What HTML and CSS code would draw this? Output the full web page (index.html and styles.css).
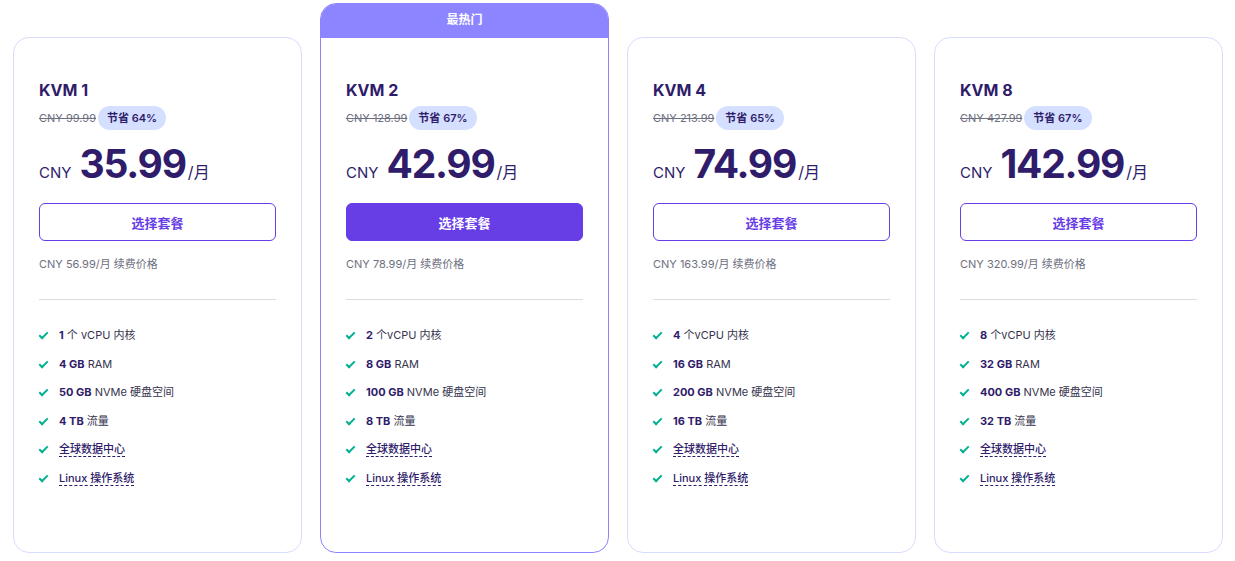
FILE: index.html
```html
<!DOCTYPE html>
<html lang="zh-CN">
<head>
  <meta charset="UTF-8" />
  <meta name="viewport" content="width=device-width, initial-scale=1" />
  <title>VPS 套餐</title>
  <link rel="stylesheet" href="styles.css">
</head>
<body>
  <div class="plans">
    <div class="card">
      <div class="card-body">
        <h2>KVM 1</h2>
        <div class="old"><s>CNY 99.99</s><span class="save">节省 64%</span></div>
        <div class="price"><span class="cur">CNY</span><span class="num">35.99</span><span class="per">/月</span></div>
        <button class="pick">选择套餐</button>
        <p class="renew">CNY 56.99/月 续费价格</p>
        <hr />
        <ul class="features">
          <li><b>1</b> 个 vCPU 内核</li>
          <li><b>4 GB</b> RAM</li>
          <li><b>50 GB</b> NVMe 硬盘空间</li>
          <li><b>4 TB</b> 流量</li>
          <li><span class="dash">全球数据中心</span></li>
          <li><span class="dash">Linux 操作系统</span></li>
        </ul>
      </div>
    </div>

    <div class="card hot">
      <div class="hot-label">最热门</div>
      <div class="card-body">
        <h2>KVM 2</h2>
        <div class="old"><s>CNY 128.99</s><span class="save">节省 67%</span></div>
        <div class="price"><span class="cur">CNY</span><span class="num">42.99</span><span class="per">/月</span></div>
        <button class="pick solid">选择套餐</button>
        <p class="renew">CNY 78.99/月 续费价格</p>
        <hr />
        <ul class="features">
          <li><b>2</b> 个vCPU 内核</li>
          <li><b>8 GB</b> RAM</li>
          <li><b>100 GB</b> NVMe 硬盘空间</li>
          <li><b>8 TB</b> 流量</li>
          <li><span class="dash">全球数据中心</span></li>
          <li><span class="dash">Linux 操作系统</span></li>
        </ul>
      </div>
    </div>

    <div class="card">
      <div class="card-body">
        <h2>KVM 4</h2>
        <div class="old"><s>CNY 213.99</s><span class="save">节省 65%</span></div>
        <div class="price"><span class="cur">CNY</span><span class="num">74.99</span><span class="per">/月</span></div>
        <button class="pick">选择套餐</button>
        <p class="renew">CNY 163.99/月 续费价格</p>
        <hr />
        <ul class="features">
          <li><b>4</b> 个vCPU 内核</li>
          <li><b>16 GB</b> RAM</li>
          <li><b>200 GB</b> NVMe 硬盘空间</li>
          <li><b>16 TB</b> 流量</li>
          <li><span class="dash">全球数据中心</span></li>
          <li><span class="dash">Linux 操作系统</span></li>
        </ul>
      </div>
    </div>

    <div class="card">
      <div class="card-body">
        <h2>KVM 8</h2>
        <div class="old"><s>CNY 427.99</s><span class="save">节省 67%</span></div>
        <div class="price"><span class="cur">CNY</span><span class="num">142.99</span><span class="per">/月</span></div>
        <button class="pick">选择套餐</button>
        <p class="renew">CNY 320.99/月 续费价格</p>
        <hr />
        <ul class="features">
          <li><b>8</b> 个vCPU 内核</li>
          <li><b>32 GB</b> RAM</li>
          <li><b>400 GB</b> NVMe 硬盘空间</li>
          <li><b>32 TB</b> 流量</li>
          <li><span class="dash">全球数据中心</span></li>
          <li><span class="dash">Linux 操作系统</span></li>
        </ul>
      </div>
    </div>
  </div>
</body>
</html>
```

FILE: styles.css
```css
body {
  margin: 0; background: #fff; color: #2f1c6a;
  font-family: Inter, "Noto Sans CJK SC", sans-serif;
}
.plans {
  display: grid; grid-template-columns: repeat(4, 1fr); gap: 18px;
  align-items: end; padding: 3px 12px 8px 13px;
}
.card {
  border: 1px solid #d8ddff; border-radius: 16px; background: #fff;
  overflow: hidden;
}
.card.hot { border-color: #8c85ff; }
.hot-label {
  background: #8c85ff; color: #fff; text-align: center;
  font-size: 12px; font-weight: 700; height: 34px; line-height: 31px;
}
.card-body { padding: 40px 25px 0; height: 514px; box-sizing: border-box; }
h2 { margin: 0; font-size: 16px; line-height: 24px; font-weight: 700; }
.old {
  display: flex; align-items: center; gap: 2px; margin-top: 4px;
  font-size: 11px; color: #6d7081;
}
.save {
  background: #d5dfff; color: #2f1c6a; border-radius: 12px;
  padding: 0 9px; line-height: 24px; font-weight: 600; font-size: 11px;
}
.price { display: flex; align-items: baseline; margin-top: 12px; height: 44px; }
.cur { font-size: 15px; margin-right: 8px; }
.num { font-size: 39px; font-weight: 700; letter-spacing: -1.2px; line-height: 44px; }
.per { font-size: 16px; margin-left: 2px; }
.pick {
  display: block; width: 100%; height: 38px; margin-top: 17px;
  border: 1px solid #673de6; border-radius: 6px; background: #fff;
  color: #673de6; font: 700 13px Inter, "Noto Sans CJK SC", sans-serif;
}
.pick.solid { background: #673de6; color: #fff; }
.renew { margin: 14px 0 0; font-size: 11px; line-height: 18px; color: #6d7081; }
hr { border: 0; border-top: 1px solid #dadce0; margin: 26px 0 0; }
.features { list-style: none; margin: 26px 0 0; padding: 0; }
.features li {
  font-size: 11px; line-height: 18px; height: 28.6px; padding-left: 20px;
  position: relative; color: #36344d;
}
.features li::before {
  content: ""; position: absolute; left: 2px; top: 4px;
  width: 3px; height: 7px; border: solid #00b090; border-width: 0 2px 2px 0;
  transform: rotate(45deg);
}
.features b { font-weight: 700; color: #2f1c6a; }
.dash { color: #2f1c6a; border-bottom: 1px dashed #2f1c6a; font-weight: 500; }
```
